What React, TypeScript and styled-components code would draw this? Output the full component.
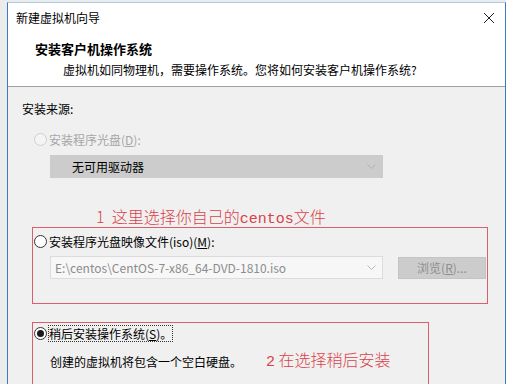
import React from 'react';
import styled, { createGlobalStyle } from 'styled-components';

const GlobalStyle = createGlobalStyle`
    html, body {
        margin: 0;
        padding: 0;
        background: #ececec;
        font-family: "Noto Sans CJK SC", "Noto Sans", sans-serif;
        font-size: 12px;
        color: #000;
    }
`;

const Window = styled.div`
    margin: 2px 0 0 7px;
    width: 497px;
    height: 382px;
    border-left: 1px solid #3a7cc0;
    border-right: 1px solid #3a7cc0;
    border-top: 1px solid #aacbe8;
    background: #f0f0f0;
    display: flex;
    flex-direction: column;
    overflow: hidden;
`;

const TitleBar = styled.div`
    height: 30px;
    display: flex;
    align-items: center;
    justify-content: space-between;
    padding: 0 10px 0 8px;
    background: #fff;
`;

const TitleText = styled.span`
    font-size: 12px;
    line-height: 14px;
    margin-top: 1px;
`;

const CloseIcon = styled.svg`
    width: 12px;
    height: 12px;
    margin-top: 1px;
`;

const Header = styled.div`
    background: #fff;
    height: 56px;
    border-bottom: 1px solid #a0a0a0;
    display: flex;
    flex-direction: column;
    padding-left: 27px;
`;

const HeaderTitle = styled.div`
    font-size: 13px;
    font-weight: bold;
    line-height: 16px;
    margin-top: 9px;
`;

const HeaderSub = styled.div`
    font-size: 12px;
    line-height: 16px;
    margin-top: 5px;
    padding-left: 28px;
`;

const Body = styled.div`
    flex: 1;
    display: flex;
    flex-direction: column;
    padding: 14px 0 0 14px;
`;

const SectionLabel = styled.div`
    line-height: 16px;
`;

const RadioRow = styled.label<{ $disabled?: boolean }>`
    display: flex;
    align-items: center;
    height: 16px;
    color: ${p => (p.$disabled ? '#a6a6a6' : '#000')};
`;

const DisabledRadioRow = styled(RadioRow)`
    margin: 14px 0 0 12px;
`;

const RadioCircle = styled.span<{ $disabled?: boolean; $checked?: boolean }>`
    width: 11px;
    height: 11px;
    border-radius: 50%;
    border: 1px solid ${p => (p.$disabled ? '#cfcfcf' : '#333')};
    background: ${p => (p.$disabled ? '#f4f4f4' : '#fff')};
    margin-right: 2px;
    display: flex;
    align-items: center;
    justify-content: center;
    flex-shrink: 0;
    &::after {
        content: '';
        display: ${p => (p.$checked ? 'block' : 'none')};
        width: 7px;
        height: 7px;
        border-radius: 50%;
        background: #1a1a1a;
    }
`;

const Focus = styled.span`
    outline: 1px dotted #333;
    outline-offset: 0px;
    line-height: 15px;
`;

const U = styled.span`
    text-decoration: underline;
`;

const Combo = styled.div<{ $disabled?: boolean }>`
    width: 333px;
    height: 23px;
    box-sizing: border-box;
    margin-left: 28px;
    display: flex;
    align-items: center;
    justify-content: space-between;
    background: ${p => (p.$disabled ? '#cccccc' : '#f7f7f7')};
    border: 1px solid ${p => (p.$disabled ? '#cccccc' : '#dcdcdc')};
    color: ${p => (p.$disabled ? '#000' : '#8c8c8c')};
    padding: 0 6px 0 ${p => (p.$disabled ? '21px' : '4px')};
`;

const Chevron = styled.svg`
    width: 9px;
    height: 6px;
`;

const Annotation = styled.div`
    color: #d9414a;
    font-size: 16px;
    line-height: 16px;
    font-weight: 300;
`;

const AnnoLatin = styled.span`
    font-family: "Liberation Mono", monospace;
    font-size: 15px;
`;

const Note = styled(Annotation)`
    margin: 30px 0 0 74px;
`;

const RedBox = styled.div<{ $w: number; $h: number }>`
    width: ${p => p.$w}px;
    height: ${p => p.$h}px;
    box-sizing: border-box;
    border: 1px solid #d9606a;
    margin: -1px 0 0 10px;
    display: flex;
    flex-direction: column;
    padding: 5px 0 0 1px;
`;

const FileRow = styled.div`
    display: flex;
    align-items: center;
    margin-top: 7px;
    gap: 15px;
`;

const FileCombo = styled(Combo)`
    margin-left: 16px;
`;

const BrowseButton = styled.div`
    width: 88px;
    height: 22px;
    background: #cccccc;
    border: 1px solid #c4c4c4;
    box-sizing: border-box;
    color: #8f8f8f;
    display: flex;
    align-items: center;
    justify-content: center;
`;

const SecondBox = styled(RedBox)`
    margin-top: 18px;
    padding-top: 2px;
`;

const DescRow = styled.div`
    display: flex;
    align-items: center;
    margin: 10px 0 0 16px;
`;

const DescText = styled.span`
    width: 216px;
`;

const FirstDropdown = styled.div`
    margin-top: 8px;
`;

export default function App() {
    return (
        <>
            <GlobalStyle />
            <Window>
                <TitleBar>
                    <TitleText>新建虚拟机向导</TitleText>
                    <CloseIcon viewBox="0 0 12 12">
                        <path d="M1 1 L11 11 M11 1 L1 11" stroke="#222" strokeWidth="1" fill="none" />
                    </CloseIcon>
                </TitleBar>
                <Header>
                    <HeaderTitle>安装客户机操作系统</HeaderTitle>
                    <HeaderSub>虚拟机如同物理机，需要操作系统。您将如何安装客户机操作系统?</HeaderSub>
                </Header>
                <Body>
                    <SectionLabel>安装来源:</SectionLabel>
                    <DisabledRadioRow $disabled>
                        <RadioCircle $disabled />
                        安装程序光盘(<U>D</U>):
                    </DisabledRadioRow>
                    <FirstDropdown>
                        <Combo $disabled>
                            无可用驱动器
                            <Chevron viewBox="0 0 9 6">
                                <path d="M0.5 0.5 L4.5 4.5 L8.5 0.5" stroke="#b0b0b0" fill="none" />
                            </Chevron>
                        </Combo>
                    </FirstDropdown>
                    <Note>
                        1&nbsp; 这里选择你自己的<AnnoLatin>centos</AnnoLatin>文件
                    </Note>
                    <RedBox $w={456} $h={77}>
                        <RadioRow>
                            <RadioCircle />
                            安装程序光盘映像文件(iso)(<U>M</U>):
                        </RadioRow>
                        <FileRow>
                            <FileCombo>
                                E:\centos\CentOS-7-x86_64-DVD-1810.iso
                                <Chevron viewBox="0 0 9 6">
                                    <path d="M0.5 0.5 L4.5 4.5 L8.5 0.5" stroke="#b8b8b8" fill="none" />
                                </Chevron>
                            </FileCombo>
                            <BrowseButton>
                                浏览(<U>R</U>)...
                            </BrowseButton>
                        </FileRow>
                    </RedBox>
                    <SecondBox $w={397} $h={63}>
                        <RadioRow>
                            <RadioCircle $checked />
                            <Focus>
                                稍后安装操作系统(<U>S</U>)。
                            </Focus>
                        </RadioRow>
                        <DescRow>
                            <DescText>创建的虚拟机将包含一个空白硬盘。</DescText>
                            <Annotation>
                                <AnnoLatin>2</AnnoLatin> 在选择稍后安装
                            </Annotation>
                        </DescRow>
                    </SecondBox>
                </Body>
            </Window>
        </>
    );
}
